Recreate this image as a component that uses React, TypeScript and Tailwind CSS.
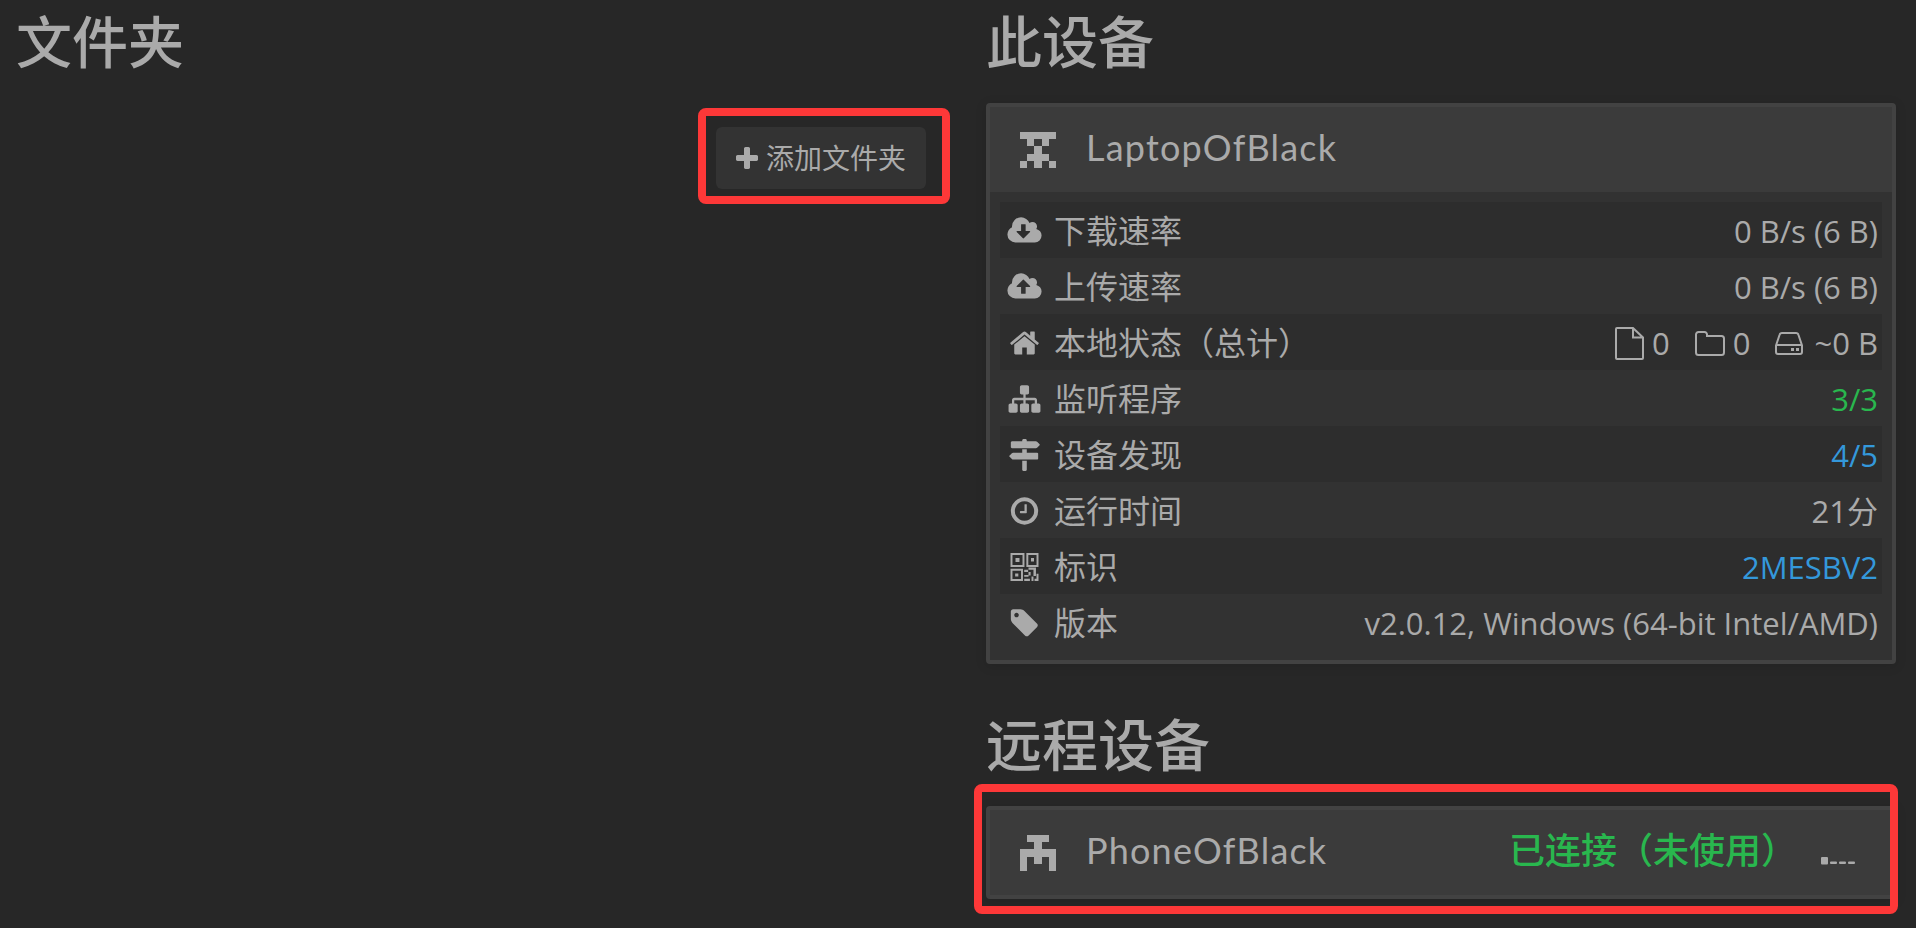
import type { ReactNode } from "react";

const CLOUD =
  "M1856 1152q0 159-112.5 271.5t-271.5 112.5h-1088q-185 0-316.5-131.5t-131.5-316.5q0-130 70-240t188-165q-2-30-2-43 0-212 150-362t362-150q156 0 285.5 87t188.5 231q71-62 166-62 106 0 181 75t75 181q0 76-41 138 130 31 213.5 135.5t83.5 238.5z";

const ICONS = {
  download:
    "M1216 928q0-14-9-23t-23-9h-224v-352q0-13-9.5-22.5t-22.5-9.5h-192q-13 0-22.5 9.5t-9.5 22.5v352h-224q-13 0-22.5 9.5t-9.5 22.5q0 14 9 23l352 352q9 9 23 9t23-9l351-351q10-12 10-24z" + CLOUD,
  upload:
    "M1216 864q0-14-9-23l-352-352q-9-9-23-9t-23 9l-351 351q-10 12-10 24 0 14 9 23t23 9h224v352q0 13 9.5 22.5t22.5 9.5h192q13 0 22.5-9.5t9.5-22.5v-352h224q13 0 22.5-9.5t9.5-22.5z" + CLOUD,
  home: "M1472 992v480q0 26-19 45t-45 19h-384v-384h-256v384h-384q-26 0-45-19t-19-45v-480q0-1 .5-3t.5-3l575-474 575 474q1 2 1 6zm223-69l-62 74q-8 9-21 11h-3q-13 0-21-7l-692-577-692 577q-12 8-24 7-13-2-21-11l-62-74q-8-10-7-23.5t11-21.5l719-599q32-26 76-26t76 26l244 204v-195q0-14 9-23t23-9h192q14 0 23 9t9 23v408l219 182q10 8 11 21.5t-7 23.5z",
  sitemap:
    "M1792 1248v320q0 40-28 68t-68 28h-320q-40 0-68-28t-28-68v-320q0-40 28-68t68-28h96v-192h-512v192h96q40 0 68 28t28 68v320q0 40-28 68t-68 28h-320q-40 0-68-28t-28-68v-320q0-40 28-68t68-28h96v-192h-512v192h96q40 0 68 28t28 68v320q0 40-28 68t-68 28h-320q-40 0-68-28t-28-68v-320q0-40 28-68t68-28h96v-192q0-52 38-90t90-38h512v-192h-96q-40 0-68-28t-28-68v-320q0-40 28-68t68-28h320q40 0 68 28t28 68v320q0 40-28 68t-68 28h-96v192h512q52 0 90 38t38 90v192h96q40 0 68 28t28 68z",
  signs:
    "M1745 297q10 10 10 23t-10 23l-141 141q-28 28-68 28h-1344q-26 0-45-19t-19-45v-256q0-26 19-45t45-19h576v-64q0-26 19-45t45-19h128q26 0 45 19t19 45v64h512q40 0 68 28zm-977 919h256v512q0 26-19 45t-45 19h-128q-26 0-45-19t-19-45v-512zm832-448q26 0 45 19t19 45v256q0 26-19 45t-45 19h-1344q-40 0-68-28l-141-141q-10-10-10-23t10-23l141-141q28-28 68-28h512v-192h256v192h576z",
  clock:
    "M1024 544v448q0 14-9 23t-23 9h-320q-14 0-23-9t-9-23v-64q0-14 9-23t23-9h224v-352q0-14 9-23t23-9h64q14 0 23 9t9 23zm416 352q0-148-73-273t-198-198-273-73-273 73-198 198-73 273 73 273 198 198 273 73 273-73 198-198 73-273zm224 0q0 209-103 385.5t-279.5 279.5-385.5 103-385.5-103-279.5-279.5-103-385.5 103-385.5 279.5-279.5 385.5-103 385.5 103 279.5 279.5 103 385.5z",
  qrcode:
    "M110 110h784v784H110zM220 220v564h564V220zM390 390h224v224H390zM1000 110h682v784H1000zM1110 220v564h462V220zM1260 390h170v190h-170zM110 1000h700v682H110zM220 1110v462h480v-462zM370 1260h180v170H370zM880 1050h220v130H880zM1120 920h420v130H1120zM1400 1050h140v350h-140zM1120 1180h120v200h-120zM880 1340h240v110H880zM880 1560h320v120H880zM1290 1430h110v250h-110zM1460 1560h222v120H1460zM1570 1270h112v290h-112z",
  tag: "M576 448q0-53-37.5-90.5t-90.5-37.5-90.5 37.5-37.5 90.5 37.5 90.5 90.5 37.5 90.5-37.5 37.5-90.5zm1067 576q0 53-37 90l-491 492q-39 37-91 37-53 0-90-37l-715-716q-38-37-64.5-101t-26.5-117v-416q0-52 38-90t90-38h416q53 0 117 26.5t102 64.5l715 714q37 39 37 91z",
  plus: "M1600 736v192q0 40-28 68t-68 28h-416v416q0 40-28 68t-68 28h-192q-40 0-68-28t-28-68v-416h-416q-40 0-68-28t-28-68v-192q0-40 28-68t68-28h416v-416q0-40 28-68t68-28h192q40 0 68 28t28 68v416h416q40 0 68 28t28 68z",
};

type IconName = keyof typeof ICONS;

function Icon({ name, className }: { name: IconName; className: string }) {
  return (
    <svg viewBox="-256 0 2304 1792" className={className} fill="currentColor" fillRule="evenodd" aria-hidden="true">
      <path d={ICONS[name]} />
    </svg>
  );
}

// Each string is one line of a 5x5 identicon, "#" marks a filled cell.
function Identicon({ rows }: { rows: string[] }) {
  return (
    <svg viewBox="0 0 5 5" className="size-9" fill="currentColor" shapeRendering="crispEdges" aria-hidden="true">
      {rows.flatMap((row, y) =>
        row.split("").map((cell, x) =>
          cell === "#" ? <rect key={`${x}-${y}`} x={x} y={y} width="1" height="1" /> : null,
        ),
      )}
    </svg>
  );
}

function LocalState() {
  return (
    <span className="flex items-center">
      <svg viewBox="0 0 29 33" className="mr-2 h-[33px] w-[29px]" fill="none" stroke="currentColor" strokeWidth="2" aria-hidden="true">
        <path d="M2 1h16l10 9.5V31a1 1 0 0 1-1 1H2a1 1 0 0 1-1-1V2a1 1 0 0 1 1-1zM18 1v9.500h10" />
      </svg>
      0
      <svg viewBox="0 0 30 25" className="mr-2 ml-[25px] h-[25px] w-[30px]" fill="none" stroke="currentColor" strokeWidth="2" aria-hidden="true">
        <path d="M1 3.500A2.500 2.500 0 0 1 3.500 1h6A2.500 2.500 0 0 1 12 3.500V5h14.500A2.500 2.500 0 0 1 29 7.500v14a2.500 2.500 0 0 1-2.500 2.500h-23A2.500 2.500 0 0 1 1 21.500z" />
      </svg>
      0
      <svg viewBox="0 0 28 23" className="mr-[11px] ml-[25px] h-[23px] w-7" fill="none" stroke="currentColor" strokeWidth="2" aria-hidden="true">
        <path d="M1 13.500 4.500 3Q5 1 7 1h14q2 0 2.500 2L27 13.500V20q0 2-2 2H3q-2 0-2-2zM1 13h26" />
        <path d="M16 17.500h3M21 17.500h3" strokeWidth="3" />
      </svg>
      ~0 B
    </span>
  );
}

type Row = { icon: IconName; label: string; value: ReactNode; tone?: string };

const rows: Row[] = [
  { icon: "download", label: "下载速率", value: "0 B/s (6 B)" },
  { icon: "upload", label: "上传速率", value: "0 B/s (6 B)" },
  { icon: "home", label: "本地状态（总计）", value: <LocalState /> },
  { icon: "sitemap", label: "监听程序", value: "3/3", tone: "text-[#29b74e]" },
  { icon: "signs", label: "设备发现", value: "4/5", tone: "text-[#3498db]" },
  { icon: "clock", label: "运行时间", value: "21分" },
  { icon: "qrcode", label: "标识", value: "2MESBV2", tone: "text-[#3498db]" },
  { icon: "tag", label: "版本", value: "v2.0.12, Windows (64-bit Intel/AMD)" },
];

function Heading({ children }: { children: ReactNode }) {
  return <h3 className="h-[63px] text-[56px] leading-[62px] font-medium">{children}</h3>;
}

function DeviceHeader({ name, pixels, children }: { name: string; pixels: string[]; children?: ReactNode }) {
  return (
    <div className="flex h-[85px] items-center bg-[#3b3b3b] pr-[37px] pl-[30px]">
      <Identicon rows={pixels} />
      <span className="ml-[30px] flex-1 pb-[5px] font-['Lato'] text-[36px] leading-10 tracking-[1.2px]">{name}</span>
      {children}
    </div>
  );
}

export default function App() {
  return (
    <div className="flex h-[928px] w-[1916px] overflow-hidden bg-[#272727] font-['Open_Sans','Noto_Sans_CJK_SC',sans-serif] text-[#aaa]">
      <section className="w-[970px] pt-2.5 pl-4">
        <Heading>文件夹</Heading>
        <div className="mt-[54px] flex justify-end pr-11">
          <button className="relative flex h-[62px] w-[210px] items-center rounded-md bg-[#333] pl-[13px] text-[28px]">
            <Icon name="plus" className="mt-0.5 h-7 w-9" />
            <span className="ml-px whitespace-nowrap">添加文件夹</span>
            <span className="absolute -top-[19px] -right-6 -bottom-[15px] -left-[18px] rounded-lg border-8 border-[#fd3838]" />
          </button>
        </div>
      </section>

      <section className="w-[946px] pt-2.5 pr-5 pl-4">
        <Heading>此设备</Heading>
        <div className="mt-[30px] overflow-hidden rounded border-4 border-[#424242] bg-[#323232] shadow-[0_2px_12px_rgba(0,0,0,0.12)]">
          <DeviceHeader name="LaptopOfBlack" pixels={["#####", ".#.#.", "..#..", ".###.", "#.#.#"]} />
          <ul className="p-2.5">
            {rows.map(({ icon, label, value, tone }) => (
              <li key={label} className="flex h-14 items-center pr-1 pl-1 text-[32px] leading-[46px] odd:bg-[#2d2d2d]">
                <Icon name={icon} className="mt-0.5 h-8 w-[41px]" />
                <span className="ml-[9px] flex-1 pt-0.5">{label}</span>
                <span className={tone}>
                  <span className="block pt-0.5 text-[31px]">{value}</span>
                </span>
              </li>
            ))}
          </ul>
        </div>

        <div className="mt-[49px]">
          <Heading>远程设备</Heading>
        </div>
        <div className="relative mt-[30px] rounded border-4 border-[#424242] shadow-[0_2px_12px_rgba(0,0,0,0.12)]">
          <DeviceHeader name="PhoneOfBlack" pixels={[".###.", "..#..", "#####", "#.#.#", "#...#"]}>
            <span className="pb-[3px] text-[36px] leading-10 font-medium text-[#29b74e]">已连接（未使用）</span>
            <svg viewBox="0 0 34 36" className="mb-px ml-6 h-9 w-[34px]" fill="currentColor" aria-hidden="true">
              <rect x="0" y="23" width="7" height="7.500" rx="1" />
              <rect x="9" y="27.500" width="7" height="2.500" rx="1" />
              <rect x="18" y="27.500" width="7" height="2.500" rx="1" />
              <rect x="27" y="27.500" width="7" height="2.500" rx="1" />
            </svg>
          </DeviceHeader>
          <span className="absolute -top-[26px] -right-1.5 -bottom-[19px] -left-4 rounded-lg border-8 border-[#fd3838]" />
        </div>
      </section>
    </div>
  );
}
